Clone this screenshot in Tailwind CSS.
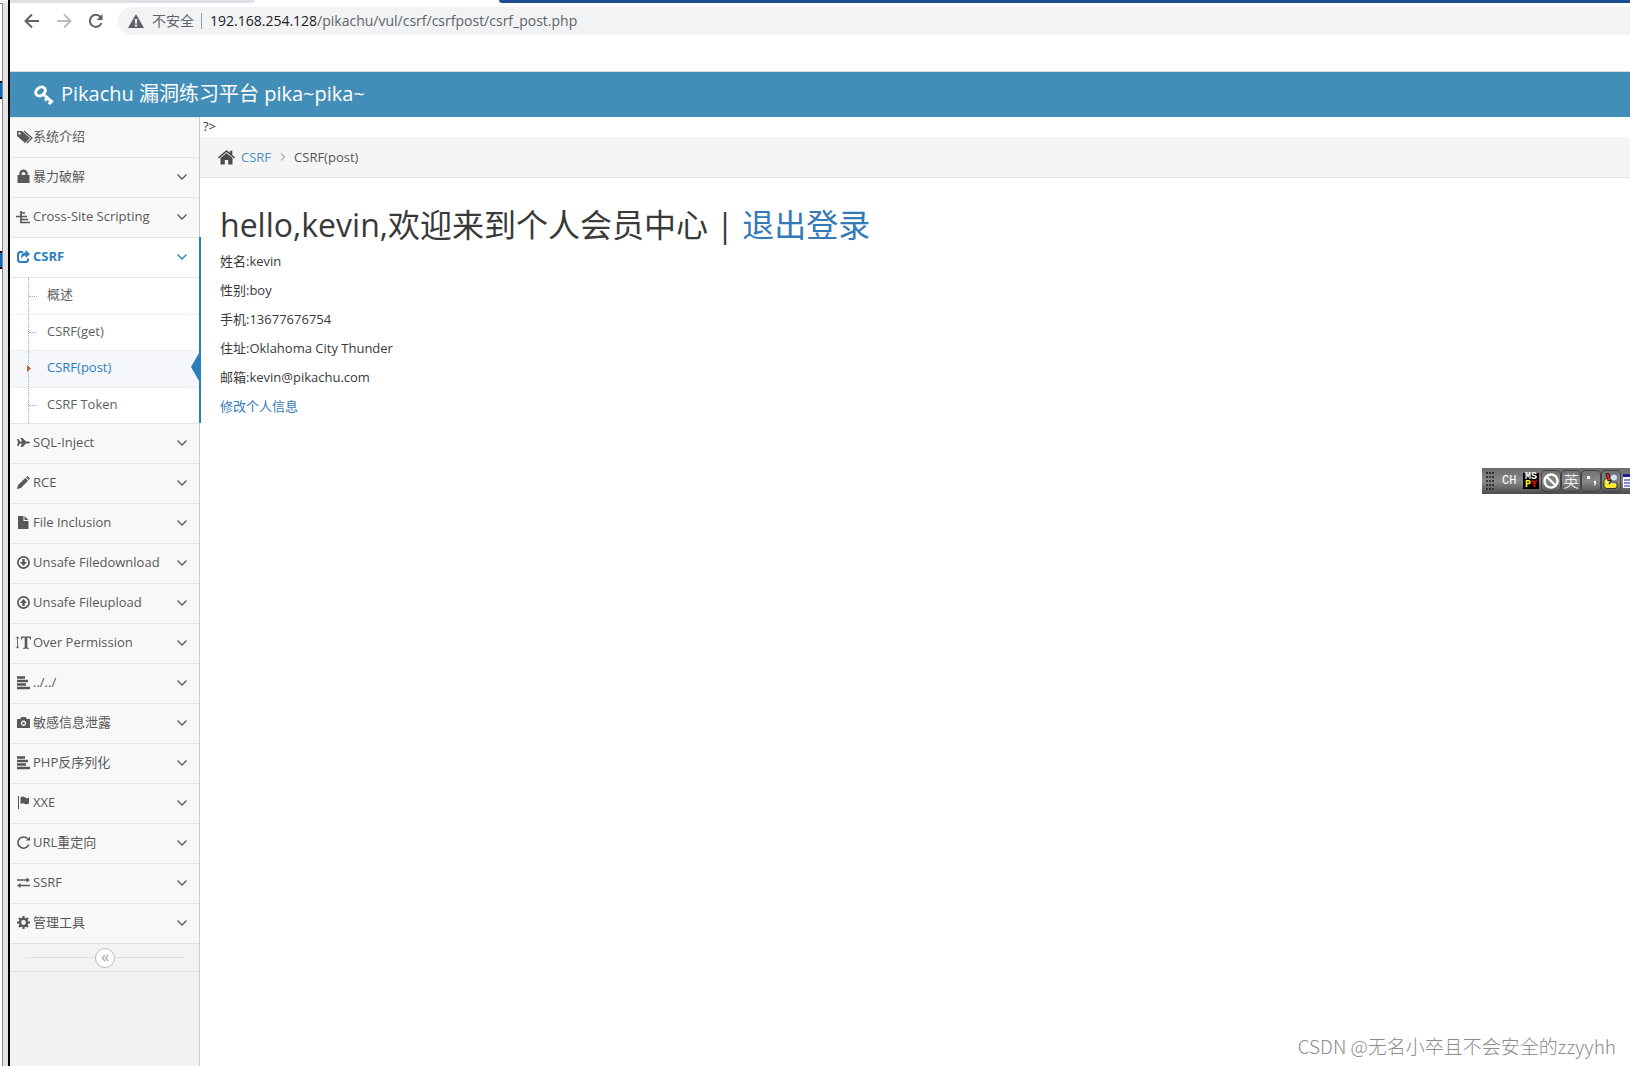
<!DOCTYPE html>
<html lang="zh">
<head>
<meta charset="utf-8">
<title>Pikachu</title>
<script src="https://cdn.jsdelivr.net/npm/@tailwindcss/browser@4"></script>
</head>
<body class="relative flex min-h-screen overflow-x-hidden bg-white font-['Open_Sans','Noto_Sans_CJK_SC',sans-serif] text-[13px] leading-5 text-[#393939]">

<!-- edge of the window behind -->
<div class="flex w-[10px] shrink-0 flex-col border-r-2 border-black bg-[#e3e3e5]">
  <div class="h-[3px] bg-[#f4f4f6]"></div>
  <div class="flex w-[3px] flex-1 flex-col border-t border-r border-[#80868c] bg-white">
    <div class="mt-[77px] h-[18px] border-y-2 border-black bg-[#0a6cbd]"></div>
    <div class="mt-[152px] h-[18px] border-y-2 border-black bg-[#0a6cbd]"></div>
  </div>
</div>

<div class="flex min-w-0 flex-1 flex-col">
  <!-- browser chrome -->
  <div class="flex h-[3px]">
    <div class="w-[245px] rounded-br bg-[#dee1e6]"></div>
    <div class="w-[244px]"></div>
    <div class="flex-1 rounded-bl bg-[#1a4c8f]"></div>
  </div>
  <div class="flex h-[69px] items-start border-b border-[#ddd] pt-1 pl-[14px]">
    <div class="flex h-7 items-center gap-4 text-[#5f6368]">
      <button aria-label="Back"><svg width="16" height="16" viewBox="0 0 16 16" fill="none" stroke="currentColor" stroke-width="2"><path d="M15 8H2M8 1.500L1.500 8 8 14.500"/></svg></button>
      <button aria-label="Forward" class="text-[#babcbe]"><svg width="16" height="16" viewBox="0 0 16 16" fill="none" stroke="currentColor" stroke-width="2"><path d="M1 8H14M8 1.500L14.500 8 8 14.500"/></svg></button>
      <button aria-label="Reload"><svg width="16" height="16" viewBox="0 0 16 16" fill="none" stroke="currentColor" stroke-width="2"><path d="M13.500 10A6 6 0 1 1 12.500 4"/><path d="M14.500 1V7H8.500Z" fill="currentColor" stroke="none"/></svg></button>
    </div>
    <div class="ml-[14px] flex h-7 flex-1 items-center rounded-l-full bg-[#f1f3f4] pl-[10px] text-sm text-[#5f6368]">
      <svg width="16" height="14" viewBox="0 0 16 14"><path d="M8 0L16 14H0Z" fill="#5f6368"/><path d="M8 5V9.500M8 10.500V12.500" stroke="#f1f3f4" stroke-width="2"/></svg>
      <span class="ml-2">不安全</span>
      <span class="mr-2 ml-[7px] h-4 w-px bg-[#9aa0a6]"></span>
      <span class="whitespace-nowrap"><span class="text-[#202124]">192.168.254.128</span>/pikachu/vul/csrf/csrfpost/csrf_post.php</span>
    </div>
  </div>

  <header class="flex h-[45px] items-center bg-[#438eb9] pl-6 text-xl text-white">
    <svg width="20" height="20" viewBox="0 0 20 20" fill="none" stroke="currentColor"><ellipse cx="6.500" cy="6.500" rx="5.200" ry="3.900" stroke-width="3" transform="rotate(-38 6.500 6.500)"/><path d="M9 9L18.500 17.500" stroke-width="3"/><path d="M11 15.500L14.500 12M14.800 19L18.500 15.300" stroke-width="3"/></svg>
    <a href="#" class="ml-[7px] pb-0.5">Pikachu 漏洞练习平台 pika~pika~</a>
  </header>

  <div class="flex flex-1">
    <aside class="w-[190px] shrink-0 border-r border-[#ccc] bg-[#f2f2f2] text-[#585858]">
      <nav><ul id="nav"></ul></nav>
      <div class="flex h-[29px] items-center border-y border-[#e0e0e0] bg-[#f3f3f3] px-[15px]">
        <span class="h-px flex-1 bg-[#e0e0e0]"></span>
        <button aria-label="Collapse" class="flex size-5 items-center justify-center rounded-full border border-[#bbb] bg-white text-[#aaa]"><svg width="8" height="8" viewBox="0 0 10 10" fill="none" stroke="currentColor" stroke-width="1.600"><path d="M5 1L1.500 5 5 9M9 1L5.500 5 9 9"/></svg></button>
        <span class="h-px flex-1 bg-[#e0e0e0]"></span>
      </div>
    </aside>

    <main class="min-w-0 flex-1">
      <div class="h-5 pl-[3px] leading-[18px]">?&gt;</div>
      <div class="flex h-[41px] items-center border-b border-[#e5e5e5] bg-[#f5f5f5] pl-[18px] text-[#555]">
        <svg width="17" height="15" viewBox="0 0 17 15" fill="#4c4c4c"><path d="M8.500 2.900L14.500 8V14.500H10.200V10H6.800V14.500H2.500V8Z"/><path d="M8.500 0L11.800 2.800V.8H14.300V5L17 7.300L16.100 8.400L8.500 2L.9 8.400L0 7.300Z"/></svg>
        <a href="#" class="ml-[6px] text-[#4c8fbd]">CSRF</a>
        <svg class="mr-2 ml-[9px]" width="6" height="8" viewBox="0 0 6 8" fill="none" stroke="#b2b6bf" stroke-width="1.500"><path d="M1 .5L4.500 4 1 7.500"/></svg>
        <span>CSRF(post)</span>
      </div>
      <div class="px-5 pt-[27px]">
        <h1 class="mb-[6px] text-[32px] leading-10 font-normal">hello,kevin,欢迎来到个人会员中心 | <a href="#" class="text-[#337ab7]">退出登录</a></h1>
        <div class="flex flex-col gap-[9px]">
          <p>姓名:kevin</p>
          <p>性别:boy</p>
          <p>手机:13677676754</p>
          <p>住址:Oklahoma City Thunder</p>
          <p>邮箱:kevin@pikachu.com</p>
          <a href="#" class="text-[#337ab7]">修改个人信息</a>
        </div>
      </div>
    </main>
  </div>
</div>

<!-- floating input-method bar -->
<div class="absolute top-[468px] right-0 flex h-[26px] w-[148px] items-center overflow-hidden bg-linear-to-b from-[#6a6a6a] via-[#8a8a8a] to-[#4c4c4c] pl-1 text-white">
  <svg class="shrink-0" width="9" height="18" viewBox="0 0 9 18" stroke="#333" stroke-width="2" stroke-dasharray="2 1"><path d="M0 1H9M0 5H9M0 9H9M0 13H9M0 17H9"/></svg>
  <span class="ml-[7px] w-[21px] shrink-0 font-['Liberation_Mono',monospace] text-xs">CH</span>
  <button aria-label="MSPY" class="flex size-4 shrink-0 flex-col items-center bg-black font-['Liberation_Mono',monospace] text-[10px] leading-2 font-bold"><span>MS</span><span class="text-[#ff0]">P<span class="text-[#f00]">Y</span></span></button>
  <div class="ml-0.5 flex shrink-0">
    <button aria-label="Disabled" class="flex h-[22px] w-5 items-center justify-center rounded-sm border border-[#444]"><svg width="16" height="16" viewBox="0 0 16 16" fill="none" stroke="#fff" stroke-width="2.400"><circle cx="8" cy="8" r="6.500"/><path d="M3.500 3.500L12.500 12.500"/></svg></button>
    <button class="flex h-[22px] w-5 items-center justify-center rounded-sm border border-[#444] text-base font-light">英</button>
    <button aria-label="Punctuation" class="flex h-[22px] w-5 items-center justify-center rounded-sm border border-[#444]"><svg width="14" height="16" viewBox="0 0 14 16" fill="#fff"><path d="M3 3H6V6H3ZM10 8H12V11L11 12.500H10L11 10.500H10Z"/></svg></button>
    <button aria-label="Tools" class="flex h-[22px] w-5 items-center justify-center rounded-sm border border-[#444]"><svg width="16" height="16" viewBox="0 0 16 16" stroke="#000" stroke-width=".7"><path d="M1 7L4 5 9 10H14V14L12 15.500H3L1 13Z" fill="#ffe82e"/><path d="M3 1L5.500 0 8 7 5 8Z" fill="#e22"/><path d="M2 8L13 11" stroke="#fff"/><circle cx="11" cy="4.500" r="3.600" fill="#cde6f5" stroke="#456"/><path d="M8.500 7.500L6 11" stroke="#234" stroke-width="1.500"/></svg></button>
    <svg class="mt-1 ml-0.5" width="14" height="14" viewBox="0 0 14 14"><path d="M0 0H14V14H0Z" fill="#fff"/><path d="M0 0H14V3H0Z" fill="#1a1aa8"/><path d="M1 6H14M1 9H14M1 12H14" stroke="#1a1aa8"/></svg>
  </div>
</div>

<div class="absolute right-[14px] bottom-2 font-['Noto_Sans_CJK_SC',sans-serif] text-[19px] leading-6 font-light text-[#8c8c8c]">CSDN @无名小卒且不会安全的zzyyhh</div>

<script>
const bars = '<path d="M0 1.500H8M0 5H11M0 8.500H9M0 12H13" stroke="currentColor" stroke-width="2.600"/>';
const items = [
  ['系统介绍', '<path d="M0 1H5L13 8 8 13 0 6ZM2.500 2.200A1.200 1.200 0 1 0 2.600 2.200Z" fill="currentColor" fill-rule="evenodd"/><path d="M7 1L15 8 10 13" fill="none" stroke="currentColor" stroke-width="1.300"/>'],
  ['暴力破解', '<path d="M.5 5H12.500V13H.5Z" fill="currentColor"/><path d="M3.500 6V3.500A3 2.800 0 0 1 9.500 3.500V6" fill="none" stroke="currentColor" stroke-width="2.400"/>'],
  ['Cross-Site Scripting', '<path d="M-1 6.500H4M4 1V12.500H13M4 3H8M4 6.500H10M4 9.500H11" fill="none" stroke="currentColor" stroke-width="1.700"/>'],
  ['CSRF', '<path d="M6 2H3.500Q1 2 1 4.500V9.500Q1 12 3.500 12H8.500Q11 12 11 9.500V8.500" fill="none" stroke="currentColor" stroke-width="2"/><path d="M8.500 0L13 4 8.500 8V5.500Q5.500 5.500 4.500 9 3 3 8.500 2.500Z" fill="currentColor"/>'],
  ['SQL-Inject', '<path d="M0 3H1.500L3 5.500H5L3.500 2H5.500L9 5.500H11.500L13.500 6.500 11.500 7.500H9L5.500 11H3.500L5 7.500H3L1.500 10H0L1 6.500Z" fill="currentColor"/>'],
  ['RCE', '<path d="M0 13L1 9 8.300 2 11 4.700 4 12ZM9 1.300L10.400 0 13 2.600 11.700 4Z" fill="currentColor"/>'],
  ['File Inclusion', '<path d="M1 0H6.500V5H11.500V13H1ZM7.500 0L11.500 4H7.500Z" fill="currentColor"/>'],
  ['Unsafe Filedownload', '<circle cx="6.500" cy="6.500" r="5.600" fill="none" stroke="currentColor" stroke-width="1.700"/><path d="M5.300 3H7.700V6H10L6.500 10 3 6H5.300Z" fill="currentColor"/>'],
  ['Unsafe Fileupload', '<circle cx="6.500" cy="6.500" r="5.600" fill="none" stroke="currentColor" stroke-width="1.700"/><path d="M5.300 10H7.700V7H10L6.500 3 3 7H5.300Z" fill="currentColor"/>'],
  ['Over Permission', '<path d="M.5 1V12M-1 2.500L.5 .8 2 2.500M-1 10.500L.5 12.200 2 10.500" fill="none" stroke="currentColor" stroke-width=".9"/><path d="M4 .5H14V3.500H13L12.500 1.800H10.300V11.500L12 12V12.700H6V12L7.700 11.500V1.800H5.500L5 3.500H4Z" fill="currentColor"/>'],
  ['../../', bars],
  ['敏感信息泄露', '<path d="M0 3H3L4.500 1H8.500L10 3H13V12H0ZM6.500 4.500A2.700 2.700 0 1 0 6.600 4.500Z" fill="currentColor" fill-rule="evenodd"/><circle cx="6.500" cy="7.200" r="1.200" fill="currentColor"/>'],
  ['PHP反序列化', bars],
  ['XXE', '<path d="M1 0H2V13H1ZM3.500 1.500Q6-.5 8 1.300T12 1.300V7.500Q9.500 9 7.500 7.800T3.500 8Z" fill="currentColor"/>'],
  ['URL重定向', '<path d="M11.800 8.500A5.600 5.600 0 1 1 10.500 2.600" fill="none" stroke="currentColor" stroke-width="1.600"/><path d="M13 .5V4.500H9Z" fill="currentColor"/>'],
  ['SSRF', '<path d="M0 4H10M3 9.500H13" stroke="currentColor" stroke-width="1.600"/><path d="M9.500 1.500L13 4 9.500 6.500ZM3.500 7L0 9.500 3.500 12Z" fill="currentColor"/>'],
  ['管理工具', '<circle cx="6.500" cy="6.500" r="3.600" fill="none" stroke="currentColor" stroke-width="2.400"/><path d="M6.500 0V3M6.500 10V13M0 6.500H3M10 6.500H13M2 2L4 4M9 9L11 11M2 11L4 9M9 4L11 2" stroke="currentColor" stroke-width="2.200"/>']
];
const chevron = '<svg class="mb-0.5 ml-auto" width="10" height="6" viewBox="0 0 10 6" fill="none" stroke="currentColor" stroke-width="1.300"><path d="M.5 .5L5 5 9.500 .5"/></svg>';

const dash = '<span class="w-2 border-t border-dotted border-[#8fb4d0]"></span>';
const sub = `
<ul class="border-t border-[#e5e5e5] bg-white text-[#616161]">
  <li class="flex h-9 items-center pl-[18px]"><span class="flex h-full w-[19px] items-center border-l border-dotted border-[#8fb4d0]">${dash}</span><a href="#" class="pb-1">概述</a></li>
  <li class="flex h-9 items-center border-t border-dotted border-[#e4e4e4] pl-[18px]"><span class="flex h-full w-[19px] items-center border-l border-dotted border-[#8fb4d0]">${dash}</span><a href="#" class="pb-1">CSRF(get)</a></li>
  <li class="relative flex h-[37px] items-center border-t border-dotted border-[#e4e4e4] bg-[#f5f7fb] pl-[18px]"><span class="flex h-full w-[19px] items-center border-l border-dotted border-[#8fb4d0] pb-0.5"><svg class="-ml-0.5" width="4" height="7" viewBox="0 0 4 7"><path d="M0 0L4 3.500 0 7Z" fill="#c86139"/></svg></span><a href="#" class="pb-1 text-[#2b7dbc]">CSRF(post)</a><svg class="absolute top-0.5 right-0" width="8" height="28" viewBox="0 0 8 28"><path d="M8 0V28L0 14Z" fill="#2b7dbc"/></svg></li>
  <li class="flex h-9 items-center border-t border-dotted border-[#e4e4e4] pl-[18px]"><span class="flex h-full w-[19px] items-center border-l border-dotted border-[#8fb4d0]">${dash}</span><a href="#" class="pb-1">CSRF Token</a></li>
</ul>`;

document.getElementById('nav').innerHTML = items.map(([text, icon], i) => {
  const open = text === 'CSRF';
  return `<li class="${open ? 'relative -mr-0.5 border-r-2 border-[#2b7dbc]' : ''}">
    <a href="#" class="flex h-10 items-center border-t border-[#e5e5e5] pl-[7px] ${open ? 'pr-3 bg-white font-bold text-[#2b7dbc]' : 'pr-3 bg-[#f8f8f8]'}">
      <svg class="mr-[3px] mb-0.5 shrink-0 overflow-visible" width="13" height="13" viewBox="0 0 13 13">${icon}</svg>
      <span class="pb-1 whitespace-nowrap">${text}</span>${i ? chevron : ''}
    </a>${open ? sub : ''}</li>`;
}).join('');
</script>
</body>
</html>
